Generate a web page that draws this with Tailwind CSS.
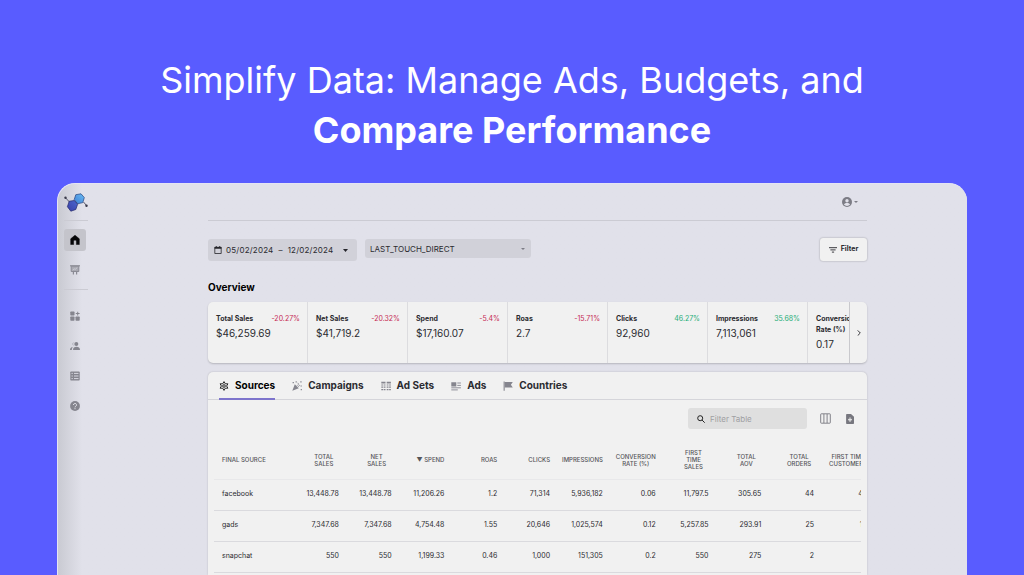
<!DOCTYPE html>
<html lang="en">
<head>
    <meta charset="UTF-8">
    <meta name="viewport" content="width=device-width, initial-scale=1.0">
    <title>Ads Dashboard</title>
    <script src="https://cdn.jsdelivr.net/npm/@tailwindcss/browser@4"></script>
</head>
<body class="h-screen overflow-hidden bg-[#595cff] font-['Inter',sans-serif] text-[#2b2b30] flex flex-col">
    <h1 class="pt-[55px] text-center text-[36px] leading-[50px] font-normal text-white">
        Simplify Data: Manage Ads, Budgets, and<br>
        <strong class="font-bold">Compare Performance</strong>
    </h1>

    <div class="mt-[28px] mx-[57px] flex-1 min-h-0 flex rounded-t-[18px] overflow-hidden bg-[#e1e1ea] bg-linear-to-r from-[#c9cad2] to-[#e1e1ea] to-[24px] border-l border-t border-[#e4e4f4]">
        <!-- Sidebar -->
        <nav class="w-[31px] shrink-0 pl-[6px] flex flex-col">
            <a href="#" aria-label="Home page" class="h-[36px] pt-[2px] flex items-center">
                <svg class="w-6 h-5" viewBox="0 0 24 20">
                    <defs>
                        <linearGradient id="light" x1="0" y1="1" x2="1" y2="0"><stop offset="0" stop-color="#3c7fd6"/><stop offset="1" stop-color="#6cbcf2"/></linearGradient>
                        <linearGradient id="dark" x1="0" y1="1" x2="1" y2="0"><stop offset="0" stop-color="#3a3fa6"/><stop offset="1" stop-color="#4a68d0"/></linearGradient>
                    </defs>
                    <path d="M1.500 4.800l4 4.200M19.500 9l3 3.500" stroke="#4a4a5c" stroke-width=".9"/>
                    <circle cx="1.500" cy="4.800" r="1.200" fill="#3a3a4a"/>
                    <circle cx="22.500" cy="12.800" r="1.200" fill="#3a3a4a"/>
                    <path d="M11.800 1.700L17 .8l3.300 3.800-1.500 5-5.200 1.200-3.400-4.200z" fill="url(#light)" stroke="#24407e" stroke-width=".7" stroke-linejoin="round"/>
                    <path d="M5.200 8.200l5.200-.7 3.200 3.800-1.800 5.200-5 1.700-3.400-4.500z" fill="url(#dark)" stroke="#24286a" stroke-width=".7" stroke-linejoin="round"/>
                </svg>
            </a>
            <div class="border-t border-[#cbcbd3] w-6"></div>
            <a href="#" aria-label="Home" class="mt-2 size-[22px] rounded-[3px] bg-[#c4c4cb] flex items-center justify-center">
                <svg class="size-[10px]" viewBox="0 0 10 10" fill="#050507"><path d="M5 .2L.7 3.800V9.600H3.600V6.500a1.400 1.400 0 0 1 2.800 0V9.600H9.300V3.800z" stroke="#050507" stroke-width=".5" stroke-linejoin="round"/></svg>
            </a>
            <a href="#" aria-label="Reports" class="mt-2 size-[22px] flex items-center justify-center">
                <svg class="size-[10px]" viewBox="0 0 10 10" fill="none" stroke="#8b8b94">
                    <path d="M0 .8h10" stroke-width="1.200"/><path d="M1.200 1.200h7.600v5.300H1.200z" fill="#a9a9b1" stroke-width="1"/>
                    <path d="M2.700 5l1.500-1.200 1 .6 2-1.700" stroke="#e1e1ea" stroke-width=".6"/><path d="M3.400 7v2.600M6.600 7v2.600" stroke-width="1.200"/>
                </svg>
            </a>
            <div class="mt-2 border-t border-[#cbcbd3] w-6"></div>
            <div class="mt-[15px] w-[22px] flex flex-col gap-2">
                <a href="#" aria-label="Apps" class="h-[22px] flex items-center justify-center">
                    <svg class="size-[10px]" viewBox="0 0 10 10" fill="#85858e"><rect x=".3" y=".5" width="4.200" height="4" rx=".7"/><rect x=".3" y="5.500" width="4.200" height="4.200" rx=".7"/><rect x="5.500" y="5.500" width="4.200" height="4.200" rx=".7"/><path d="M7.200 .8h1v1.300h1.400v1H8.200v1.400h-1V3.100H5.800v-1h1.400z"/></svg>
                </a>
                <a href="#" aria-label="Audiences" class="h-[22px] flex items-center justify-center">
                    <svg class="size-[10px]" viewBox="0 0 10 10" fill="#85858e"><circle cx="6.300" cy="3" r="2"/><path d="M3 9c0-2.400 1.600-3.200 3.500-3.200S10 6.600 10 9z"/><path d="M3.700 1.200a2 2 0 0 0 0 3.600 2.800 2.800 0 0 1 0-3.600z"/><path d="M0 9c0-1.800 1-2.800 2.800-3C2 6.900 1.800 7.800 1.800 9z"/></svg>
                </a>
                <a href="#" aria-label="Lists" class="h-[22px] flex items-center justify-center">
                    <svg class="size-[10px]" viewBox="0 0 10 10"><rect x=".3" y=".5" width="9.400" height="9" rx=".8" fill="#85858e"/><path d="M1.500 2.400h1.300M4 2.400h4.500M1.500 5h1.300M4 5h4.500M1.500 7.600h1.300M4 7.600h4.500" stroke="#e1e1ea" stroke-width=".9"/></svg>
                </a>
                <a href="#" aria-label="Help" class="h-[22px] flex items-center justify-center">
                    <svg class="size-[10px]" viewBox="0 0 10 10"><circle cx="5" cy="5" r="4.900" fill="#85858e"/><path d="M3.500 4a1.500 1.500 0 1 1 2.300 1.200C5.200 5.600 5 5.800 5 6.400M5 7.200v1" fill="none" stroke="#e6e6ec" stroke-width="1"/></svg>
                </a>
            </div>
        </nav>

        <main class="flex-1 min-w-0 ml-[119px] mr-[100px] flex flex-col">
            <header class="h-[37px] shrink-0 border-b border-[#cbcbd3] flex items-center justify-end pr-[9px]">
                <button aria-label="Account" class="flex items-center gap-[2px]">
                    <svg class="size-[10px]" viewBox="0 0 10 10"><circle cx="5" cy="5" r="5" fill="#7c7c85"/><circle cx="5" cy="3.700" r="1.700" fill="#e1e1ea"/><path d="M1.900 7.600C2.700 6.400 3.800 6.100 5 6.100s2.300.3 3.100 1.500C7.300 8.500 6.200 9 5 9s-2.300-.5-3.100-1.400z" fill="#e1e1ea"/></svg>
                    <svg class="w-1 h-[2px]" viewBox="0 0 4 2" fill="#7c7c85"><path d="M0 0h4L2 2z"/></svg>
                </button>
            </header>

            <div class="mt-[17px] flex items-start">
                <button class="mt-px h-[22px] w-[149px] px-[6px] rounded-[3px] bg-[#d1d1d9] flex items-center text-[8px] tracking-wide whitespace-nowrap">
                    <svg class="size-2 mr-1 shrink-0" viewBox="0 0 8 8"><path d="M.8 1.300h6.400v6.200H.8z" fill="none" stroke="#26262b" stroke-width=".8"/><path d="M.6 1h6.800v1.700H.6zM1.800 0h.9v1.500h-.9zM5.300 0h.9v1.500h-.9z" fill="#26262b"/></svg>
                    <span>05/02/2024</span><span class="mx-[5px]">–</span><span>12/02/2024</span>
                    <svg class="ml-[10px] w-[5px] h-[3px]" viewBox="0 0 5 3" fill="#26262b"><path d="M0 0h5L2.500 3z"/></svg>
                </button>
                <div class="relative mt-px ml-2">
                    <select aria-label="Attribution model" class="block appearance-none h-[19px] w-[166px] px-[5px] rounded-[3px] bg-[#d1d1d9] text-[8px]">
                        <option>LAST_TOUCH_DIRECT</option>
                    </select>
                    <svg class="absolute right-[6px] top-[9px] w-1 h-[2px]" viewBox="0 0 4 2" fill="#7c7c85"><path d="M0 0h4L2 2z"/></svg>
                </div>
                <button class="ml-auto h-[23px] w-[47px] rounded-[3px] bg-[#f1f1f1] shadow-[0_0_2px_#00000055] flex items-center justify-center gap-1 text-[7px] font-bold">
                    <svg class="w-2 h-[6px]" viewBox="0 0 8 6" stroke="#26262b" stroke-width=".9"><path d="M0 .7h8M1.400 2.900h5.200M2.900 5.100h2.200"/></svg>
                    Filter
                </button>
            </div>

            <h2 class="mt-[18px] text-[10px] leading-4 font-bold text-black">Overview</h2>

            <section class="mt-[7px] h-[61px] shrink-0 flex rounded-[5px] bg-[#f1f1f1] shadow-[0_1px_2px_#00000033] overflow-hidden">
                <div class="flex-1 min-w-0 flex overflow-hidden text-[10px] leading-[15px] *:w-[100px] *:shrink-0 *:pl-2 *:pr-[7px] *:pt-[11px] *:border-r *:border-[#dcdcdf]">
                    <div><div class="flex justify-between text-[7px] leading-[11px] pb-[2px]"><b>Total Sales</b><span class="text-[#c62a53]">-20.27%</span></div>$46,259.69</div>
                    <div><div class="flex justify-between text-[7px] leading-[11px] pb-[2px]"><b>Net Sales</b><span class="text-[#c62a53]">-20.32%</span></div>$41,719.2</div>
                    <div><div class="flex justify-between text-[7px] leading-[11px] pb-[2px]"><b>Spend</b><span class="text-[#c62a53]">-5.4%</span></div>$17,160.07</div>
                    <div><div class="flex justify-between text-[7px] leading-[11px] pb-[2px]"><b>Roas</b><span class="text-[#c62a53]">-15.71%</span></div>2.7</div>
                    <div><div class="flex justify-between text-[7px] leading-[11px] pb-[2px]"><b>Clicks</b><span class="text-[#1fae78]">46.27%</span></div>92,960</div>
                    <div><div class="flex justify-between text-[7px] leading-[11px] pb-[2px]"><b>Impressions</b><span class="text-[#1fae78]">35.68%</span></div>7,113,061</div>
                    <div><div class="text-[7px] leading-[11px] pb-[2px]"><b>Conversion<br>Rate (%)</b></div>0.17</div>
                </div>
                <button aria-label="Next" class="w-[18px] shrink-0 border-l border-[#c9c9cd] flex items-center justify-center">
                    <svg class="w-1 h-[6px]" viewBox="0 0 4 6" fill="none" stroke="#26262b" stroke-width=".9"><path d="M.7.4L3.300 3 .7 5.600"/></svg>
                </button>
            </section>

            <section class="mt-[9px] flex-1 min-h-0 rounded-t-[5px] bg-[#f1f1f1] shadow-[0_0_2px_#00000033] overflow-hidden">
                <div class="h-7 pl-[11px] border-b border-[#d5d5da] flex gap-[17px] text-[10px] font-bold *:flex *:items-center *:gap-[6px]">
                    <button class="relative h-[27px] text-black">
                        <svg class="size-[10px]" viewBox="0 0 10 10" fill="none" stroke="#111" stroke-width=".9"><path d="M5 .6l1.300 2.200h2.600L7.600 5l1.300 2.200H6.300L5 9.400 3.700 7.200H1.100L2.400 5 1.100 2.800h2.600z"/><circle cx="5" cy="5" r="1.300"/></svg>
                        Sources
                        <span class="absolute inset-x-0 -bottom-px h-[2px] bg-[#7d74cc]"></span>
                    </button>
                    <button>
                        <svg class="size-[10px]" viewBox="0 0 10 10" fill="#85858e"><path d="M.3 9.800l2.500-6.500 4 4z"/><path d="M.6 1h1.300v1.300H.6zM3.600.2h1.200v1.200H3.600zM8.300.3h1.300v1.300H8.300zM8.700 8h1.200v1.200H8.700zM8.500 4.600h1.300v.9H8.500z"/><path d="M5 4.800l1.600-1.600-.8-1.400M6 5.800l1.900-1.700" stroke="#85858e" stroke-width=".8" fill="none"/></svg>
                        Campaigns
                    </button>
                    <button>
                        <svg class="size-[10px]" viewBox="0 0 10 10" fill="none" stroke="#85858e"><path d="M.3 1.600h4.200M5.700 1.600h4.200" stroke-width="1.600"/><path d="M.3 4h4.200M5.700 4h4.200M.3 6.200h4.200M5.700 6.200h4.200M.3 8.600h4.200M5.700 8.600h4.200" stroke-width="1.200" stroke-dasharray="1.800 .6"/></svg>
                        Ad Sets
                    </button>
                    <button>
                        <svg class="size-[10px]" viewBox="0 0 10 10" fill="none" stroke="#85858e"><path d="M.3 1.300h5v4.200h-5z" fill="#85858e" stroke="none"/><path d="M6.300 2h3.600M6.300 4.400h3.600M.3 6.800h9.600M.3 8.900h6.500" stroke-width=".9"/></svg>
                        Ads
                    </button>
                    <button>
                        <svg class="size-[10px]" viewBox="0 0 10 10" fill="#85858e"><path d="M.6.400h1.100v9.400H.6z"/><path d="M1.700 1h8.100L7.900 3.800l1.900 2.700H1.700z"/></svg>
                        Countries
                    </button>
                </div>

                <div class="pt-2 pr-[13px] flex items-center justify-end">
                    <div class="relative">
                        <svg class="absolute left-[9px] top-[7px] size-2" viewBox="0 0 8 8" fill="none" stroke="#222" stroke-width="1"><circle cx="3.200" cy="3.200" r="2.500"/><path d="M5.100 5.100l2.600 2.600"/></svg>
                        <input type="text" aria-label="Filter Table" placeholder="Filter Table" class="block h-[21px] w-[119px] pl-[22px] rounded-[3px] bg-[#dfdfdf] text-[8px] placeholder:text-[#a0a0a3]">
                    </div>
                    <button aria-label="Columns" class="ml-[13px]">
                        <svg class="block size-[11px]" viewBox="0 0 11 11" fill="none" stroke="#77777f" stroke-width=".9"><rect x=".7" y=".8" width="9.600" height="9.400" rx=".6"/><path d="M3.900 1v9M7.100 1v9"/></svg>
                    </button>
                    <button aria-label="Export" class="ml-[15px]">
                        <svg class="block w-2 h-[10px]" viewBox="0 0 8 10"><path d="M.9 0H5l3 2.800V9.200a.8.800 0 0 1-.8.800H.9a.8.800 0 0 1-.8-.8V.800A.8.800 0 0 1 .9 0z" fill="#77777f"/><path d="M4 3.400v4M2 5.400h4M2.800 6.200L4 7.400l1.200-1.200" stroke="#f1f1f1" stroke-width=".9" fill="none"/></svg>
                    </button>
                </div>

                <div class="mt-3 mx-[6px] overflow-hidden">
                    <table class="w-[661px] table-fixed text-right text-[7px]">
                        <thead class="text-[6px] leading-[7px] text-[#55555a] *:h-[38px] **:font-medium">
                            <tr class="border-b border-[#e8e8ea] *:whitespace-nowrap *:pr-2">
                                <th class="w-20 pl-2 text-left">FINAL SOURCE</th>
                                <th><span class="inline-block w-[30px] text-center">TOTAL<br>SALES</span></th>
                                <th><span class="inline-block w-[30px] text-center">NET<br>SALES</span></th>
                                <th>▼ SPEND</th>
                                <th>ROAS</th>
                                <th>CLICKS</th>
                                <th>IMPRESSIONS</th>
                                <th><span class="inline-block text-center">CONVERSION<br>RATE (%)</span></th>
                                <th><span class="inline-block w-[30px] text-center">FIRST<br>TIME<br>SALES</span></th>
                                <th><span class="inline-block w-[30px] text-center">TOTAL<br>AOV</span></th>
                                <th><span class="inline-block w-[30px] text-center">TOTAL<br>ORDERS</span></th>
                                <th><span class="inline-block text-center">FIRST TIME<br>CUSTOMERS</span></th>
                            </tr>
                        </thead>
                        <tbody class="*:h-[31px] *:border-b *:border-[#dadade] **:pr-2">
                            <tr><td class="pl-2 text-left">facebook</td><td>13,448.78</td><td>13,448.78</td><td>11,206.26</td><td>1.2</td><td>71,314</td><td>5,936,182</td><td>0.06</td><td>11,797.5</td><td>305.65</td><td>44</td><td>42</td></tr>
                            <tr><td class="pl-2 text-left">gads</td><td>7,347.68</td><td>7,347.68</td><td>4,754.48</td><td>1.55</td><td>20,646</td><td>1,025,574</td><td>0.12</td><td>5,257.85</td><td>293.91</td><td>25</td><td>19</td></tr>
                            <tr><td class="pl-2 text-left">snapchat</td><td>550</td><td>550</td><td>1,199.33</td><td>0.46</td><td>1,000</td><td>151,305</td><td>0.2</td><td>550</td><td>275</td><td>2</td><td>2</td></tr>
                        </tbody>
                    </table>
                </div>
            </section>
        </main>
    </div>
</body>
</html>
